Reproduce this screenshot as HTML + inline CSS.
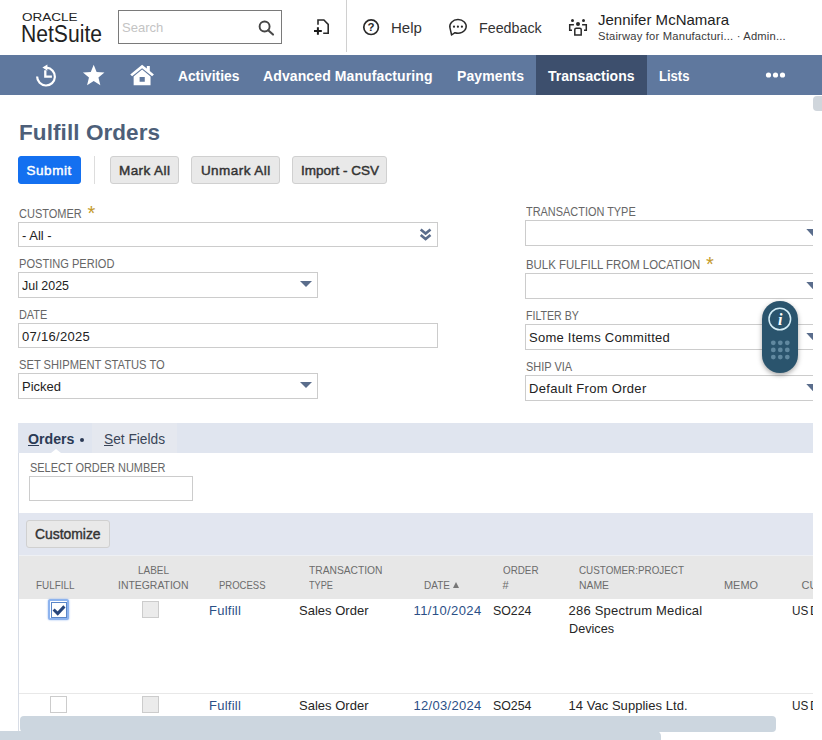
<!DOCTYPE html>
<html>
<head>
<meta charset="utf-8">
<style>
*{box-sizing:border-box;margin:0;padding:0}
html,body{width:822px;height:740px;overflow:hidden;background:#fff}
body{font-family:"Liberation Sans",sans-serif;color:#262626;position:relative}
.abs{position:absolute}
.t{position:absolute;white-space:nowrap;line-height:1;transform-origin:0 50%}
#hdr{position:absolute;left:0;top:0;width:822px;height:55px;background:#fff}
#nav{position:absolute;left:0;top:55px;width:822px;height:40px;background:#5f789e}
#nav .t{color:#fff;font-weight:bold;font-size:14px;top:14px}
#act{position:absolute;left:536px;top:0;width:111px;height:40px;background:#3d4f6d}
.lbl{font-size:12px;color:#666}
.inp{position:absolute;background:#fff;border:1px solid #ccc;height:25px}
.sel{height:26px}
.v{font-size:13px;color:#222}
.btn{position:absolute;height:28px;border:1px solid #d0d0d0;background:#e9e9e9;border-radius:3px}
.bt{font-size:13.5px;color:#333;top:163.5px;-webkit-text-stroke:0.45px #333}
.th{font-size:11px;color:#6c6c6c}
.td{font-size:13px;color:#262626}
.lnk{color:#2b4f86}
.tri{position:absolute;width:0;height:0;border-left:6px solid transparent;border-right:6px solid transparent;border-top:6.5px solid #5a6d8c}
</style>
</head>
<body>
<div id="hdr">
  <div class="t" style="transform:scaleX(1.2874);left:22px;top:11.5px;font-size:10.5px;color:#222">ORACLE</div>
  <div class="t" style="transform:scaleX(0.9182);left:21px;top:22.6px;font-size:23px;color:#222">NetSuite</div>
  <div class="abs" style="left:118px;top:10px;width:164px;height:34px;border:1px solid #7a7a7a;background:#fff"></div>
  <div class="t" style="left:122px;top:21px;font-size:13px;color:#c4c4c4">Search</div>
  <svg class="abs" style="left:0;top:0" width="822" height="55" viewBox="0 0 822 55">
    <!-- search -->
    <circle cx="264.6" cy="26.5" r="5" fill="none" stroke="#444" stroke-width="1.9"/><path d="M268.2 30.2 L273 34.6" stroke="#4a4a4a" stroke-width="2.1" stroke-linecap="round"/>
    <!-- new doc -->
    <path d="M318 24.8 V20 H323.9 L328.2 24.4 V33.3 H323.2" fill="none" stroke="#2a2a2a" stroke-width="1.6"/><path d="M314 31 H321.8 M317.9 27.2 V34.8" stroke="#1a1a1a" stroke-width="2"/>
    <!-- help -->
    <circle cx="371.1" cy="27.2" r="7.3" fill="none" stroke="#2a2a2a" stroke-width="1.7"/>
    <text x="371" y="31.2" font-size="11.5" font-weight="bold" text-anchor="middle" fill="#2a2a2a" font-family="Liberation Sans">?</text>
    <!-- feedback -->
    <path d="M454.93 32.70 A8.2 6.8 0 1 0 449.98 27.81 L451.6 35 Z" fill="none" stroke="#2a2a2a" stroke-width="1.5" stroke-linejoin="round"/>
    <circle cx="454" cy="26.7" r="1.1" fill="#2a2a2a"/><circle cx="457.9" cy="26.7" r="1.1" fill="#2a2a2a"/><circle cx="461.9" cy="26.7" r="1.1" fill="#2a2a2a"/>
    <!-- roles -->
    <circle cx="572.5" cy="20.5" r="1.5" fill="#2a2a2a"/><circle cx="583.5" cy="20.5" r="1.5" fill="#2a2a2a"/><circle cx="578" cy="23.9" r="2" fill="#2a2a2a"/>
    <path d="M574.8 35.1 V29.6 Q574.8 28.2 576.2 28.2 H579.8 Q581.2 28.2 581.2 29.6 V35.1 Z" fill="none" stroke="#2a2a2a" stroke-width="1.5"/>
    <path d="M573.9 24.8 H569.7 V30.2 H572" fill="none" stroke="#2a2a2a" stroke-width="1.5"/>
    <path d="M582.1 24.8 H586.3 V30.2 H584" fill="none" stroke="#2a2a2a" stroke-width="1.5"/>
  </svg>
  <div class="abs" style="left:346px;top:0;width:1px;height:52px;background:#d0d0d0"></div>
  <div class="t" style="left:391px;top:20px;font-size:15px;color:#333">Help</div>
  <div class="t" style="transform:scaleX(0.9518);left:478.5px;top:20px;font-size:15px;color:#333">Feedback</div>
  <div class="t" style="letter-spacing:0.01px;left:598px;top:12px;font-size:15px;color:#222">Jennifer McNamara</div>
  <div class="t" style="letter-spacing:0.20px;left:598px;top:31.3px;font-size:11.2px;color:#3a3a3a">Stairway for Manufacturi... &#183; Admin...</div>
</div>
<div id="nav">
  <div id="act"></div>
  <svg class="abs" style="left:0;top:0" width="822" height="40" viewBox="0 0 822 40">
    <!-- recent -->
    <path d="M46.6 12.7 A8.9 8.9 0 1 1 37.1 21.6" fill="none" stroke="#fff" stroke-width="2.2"/>
    <path d="M42.4 12.6 L47.4 9.5 V15.7 Z" fill="#fff"/>
    <path d="M45.3 15.3 V21.7 H51.9" fill="none" stroke="#fff" stroke-width="2.3"/>
    <!-- star -->
    <path d="M93.70 9.70 L96.62 16.98 L104.45 17.51 L98.43 22.54 L100.34 30.14 L93.70 25.97 L87.06 30.14 L88.97 22.54 L82.95 17.51 L90.78 16.98 Z" fill="#fff"/>
    <!-- home -->
    <g transform="translate(128.7,7.9) scale(1.03,0.953)"><path d="M13 2 L1.5 12.2 L3.3 14 L13 5.6 L22.7 14 L24.5 12.2 L20.5 8.6 V3.2 H17.6 V6 Z" fill="#fff"/><path d="M4.8 14.2 L13 7 L21.2 14.2 V23.5 H4.8 Z M10.6 14.8 V19.8 H15.6 V14.8 Z" fill="#fff" fill-rule="evenodd"/></g>
    <circle cx="768.5" cy="20" r="2.6" fill="#fff"/><circle cx="775.5" cy="20" r="2.6" fill="#fff"/><circle cx="782.5" cy="20" r="2.6" fill="#fff"/>
  </svg>
  <div class="t" style="transform:scaleX(0.9847);left:178px">Activities</div>
  <div class="t" style="letter-spacing:0.11px;left:263px">Advanced Manufacturing</div>
  <div class="t" style="letter-spacing:0.11px;left:457px">Payments</div>
  <div class="t" style="letter-spacing:0.01px;left:548px">Transactions</div>
  <div class="t" style="transform:scaleX(0.9331);left:659px">Lists</div>
</div>

<div class="abs" style="left:813px;top:96px;width:12px;height:15px;border-radius:4px;background:#d0d6dc"></div>

<div class="t" style="letter-spacing:0.08px;left:19px;top:122.3px;font-size:22.5px;font-weight:bold;color:#4d5f79">Fulfill Orders</div>

<div class="btn" style="left:18px;top:156px;width:63px;background:#1470f0;border-color:#1470f0"></div>
<div class="t bt" style="letter-spacing:0.54px;left:26.5px;color:#fff;-webkit-text-stroke:0.45px #fff">Submit</div>
<div class="abs" style="left:93.5px;top:156px;width:1px;height:28px;background:#ddd"></div>
<div class="btn" style="left:110px;top:156px;width:69px"></div>
<div class="t bt" style="letter-spacing:0.42px;left:119px">Mark All</div>
<div class="btn" style="left:191px;top:156px;width:89px"></div>
<div class="t bt" style="letter-spacing:0.45px;left:200.9px">Unmark All</div>
<div class="btn" style="left:292px;top:156px;width:95px"></div>
<div class="t bt" style="transform:scaleX(0.9998);left:300.5px">Import - CSV</div>

<!-- left column -->
<div class="t lbl" style="transform:scaleX(0.9174);left:18.5px;top:208px">CUSTOMER</div>
<div class="t" style="left:87.5px;top:203px;font-size:20px;color:#c49a2b">*</div>
<div class="inp" style="left:18px;top:222px;width:420px"></div>
<div class="t v" style="left:22px;top:229px">- All -</div>
<svg class="abs" style="left:418px;top:227px" width="15" height="15" viewBox="0 0 15 15"><path d="M2.7 2.4 L7.6 6.5 L12.5 2.4 M2.7 7.9 L7.6 12 L12.5 7.9" fill="none" stroke="#5a6d8c" stroke-width="2.6"/></svg>

<div class="t lbl" style="transform:scaleX(0.9230);left:18.5px;top:258px">POSTING PERIOD</div>
<div class="inp sel" style="left:18px;top:272px;width:300px"></div>
<div class="t v" style="transform:scaleX(0.9561);left:22px;top:278.8px">Jul 2025</div>
<div class="tri" style="left:299.5px;top:281.3px"></div>

<div class="t lbl" style="transform:scaleX(0.9060);left:18.5px;top:309px">DATE</div>
<div class="inp" style="left:18px;top:323px;width:420px"></div>
<div class="t v" style="letter-spacing:0.30px;left:22px;top:330px">07/16/2025</div>

<div class="t lbl" style="transform:scaleX(0.9298);left:18.5px;top:359px">SET SHIPMENT STATUS TO</div>
<div class="inp sel" style="left:18px;top:373px;width:300px"></div>
<div class="t v" style="transform:scaleX(0.9966);left:22px;top:379.8px">Picked</div>
<div class="tri" style="left:299.5px;top:382.3px"></div>

<!-- right column -->
<div class="t lbl" style="transform:scaleX(0.9106);left:525.5px;top:206px">TRANSACTION TYPE</div>
<div class="inp sel" style="left:525px;top:220px;width:300px"></div>
<div class="t lbl" style="transform:scaleX(0.9505);left:525.5px;top:259px">BULK FULFILL FROM LOCATION</div>
<div class="t" style="left:706px;top:254px;font-size:20px;color:#c49a2b">*</div>
<div class="inp sel" style="left:525px;top:273px;width:300px"></div>
<div class="t lbl" style="transform:scaleX(0.8847);left:525.5px;top:310px">FILTER BY</div>
<div class="inp sel" style="left:525px;top:324px;width:300px"></div>
<div class="t v" style="letter-spacing:0.26px;left:529px;top:330.8px">Some Items Committed</div>
<div class="t lbl" style="transform:scaleX(0.9154);left:525.5px;top:361px">SHIP VIA</div>
<div class="inp sel" style="left:525px;top:375px;width:300px"></div>
<div class="t v" style="letter-spacing:0.31px;left:529px;top:381.8px">Default From Order</div>
<svg class="abs" style="left:806px;top:228px" width="8" height="170" viewBox="0 0 8 170"><path d="M0.3 0.9 H7 V8.2 Z M0.3 53.9 H7 V61.2 Z M0.3 104.9 H7 V112.2 Z M0.3 155.9 H7 V163.2 Z" fill="#5a6d8c"/></svg>


<!-- floating widget -->
<div class="abs" style="left:762px;top:301px;width:36px;height:72px;border-radius:18px;background:#2a546d;box-shadow:0 2px 5px rgba(0,0,0,.35)"></div>
<svg class="abs" style="left:762px;top:301px" width="36" height="72" viewBox="0 0 36 72">
<circle cx="17.8" cy="18" r="10.8" fill="none" stroke="#d4eef8" stroke-width="1.5"/>
<text x="18.3" y="23.5" font-size="16" font-style="italic" font-weight="bold" text-anchor="middle" fill="#fff" font-family="Liberation Serif">i</text>
<g fill="#6189a0"><circle cx="11.3" cy="41.8" r="2.4"/><circle cx="18.3" cy="41.8" r="2.4"/><circle cx="25.3" cy="41.8" r="2.4"/><circle cx="11.3" cy="48.9" r="2.4"/><circle cx="18.3" cy="48.9" r="2.4"/><circle cx="25.3" cy="48.9" r="2.4"/><circle cx="11.3" cy="56.1" r="2.4"/><circle cx="18.3" cy="56.1" r="2.4"/><circle cx="25.3" cy="56.1" r="2.4"/></g>
</svg>

<!-- tabs -->
<div class="abs" style="left:18px;top:423px;width:795px;height:30px;background:#e0e5ef"></div>
<div class="abs" style="left:92px;top:423px;width:85px;height:30px;background:#e5e8ef"></div>
<div class="abs" style="left:51px;top:449px;width:0;height:0;border-left:5px solid transparent;border-right:5px solid transparent;border-bottom:4px solid #fff"></div>
<div class="abs" style="left:18px;top:453px;width:1px;height:287px;background:#d8dde6"></div>
<div class="t" style="transform:scaleX(0.9777);left:28px;top:432px;font-size:14.5px;font-weight:bold;color:#2b3a55"><u>O</u>rders</div>
<div class="abs" style="left:79.5px;top:438px;width:4px;height:4px;border-radius:50%;background:#2b3a55"></div>
<div class="t" style="transform:scaleX(0.9797);left:104px;top:432px;font-size:14px;color:#3a4558"><u>S</u>et Fields</div>

<div class="t lbl" style="transform:scaleX(0.9126);left:29.5px;top:462px">SELECT ORDER NUMBER</div>
<div class="inp" style="left:29px;top:476px;width:164px"></div>

<div class="abs" style="left:19px;top:513px;width:794px;height:42px;background:#e2e6f0"></div>
<div class="btn" style="left:26px;top:520px;width:84px;height:28px"></div>
<div class="t" style="transform:scaleX(0.9918);left:35.3px;top:527px;font-size:14px;color:#333;-webkit-text-stroke:0.4px #333">Customize</div>

<!-- table header -->
<div class="abs" style="left:19px;top:555px;width:794px;height:43.5px;background:#e7e7e7;border-top:1px solid #eef0f4"></div>
<div class="t th" style="transform:scaleX(0.8996);left:35.5px;top:580px">FULFILL</div>
<div class="t th" style="transform:scaleX(0.9051);left:137.5px;top:565px">LABEL</div>
<div class="t th" style="transform:scaleX(0.9481);left:117.5px;top:580px">INTEGRATION</div>
<div class="t th" style="transform:scaleX(0.8644);left:219px;top:580px">PROCESS</div>
<div class="t th" style="transform:scaleX(0.9322);left:309px;top:565px">TRANSACTION</div>
<div class="t th" style="transform:scaleX(0.8352);left:309px;top:580px">TYPE</div>
<div class="t th" style="transform:scaleX(0.9113);left:423.5px;top:580px">DATE</div>
<div class="abs" style="left:452.5px;top:582px;width:0;height:0;border-left:3.5px solid transparent;border-right:3.5px solid transparent;border-bottom:6px solid #777"></div>
<div class="t th" style="transform:scaleX(0.8934);left:502.5px;top:565px">ORDER</div>
<div class="t th" style="left:502.5px;top:580px">#</div>
<div class="t th" style="transform:scaleX(0.8964);left:578.5px;top:565px">CUSTOMER:PROJECT</div>
<div class="t th" style="transform:scaleX(0.9440);left:578.5px;top:580px">NAME</div>
<div class="t th" style="transform:scaleX(0.9932);left:723.5px;top:580px">MEMO</div>
<div class="t th" style="left:801.5px;top:580px">CUSTOMER</div>

<!-- row 1 -->
<div class="abs" style="left:48px;top:599px;width:21px;height:21px;border:2px solid #8db3ee;border-radius:2.5px;background:#fff;box-shadow:0 0 2px #8db3ee"></div>
<div class="abs" style="left:50.5px;top:601.5px;width:16px;height:16px;border:1px solid #5b86c8;background:#fff"></div>
<svg class="abs" style="left:50px;top:601px" width="17" height="17" viewBox="0 0 17 17"><path d="M3.6 8.5 L7.7 12.5 L14.4 5.4" fill="none" stroke="#27457b" stroke-width="3"/></svg>
<div class="abs" style="left:142px;top:601px;width:17px;height:17px;border:1px solid #ccc;background:#ebebeb"></div>
<div class="t td lnk" style="letter-spacing:0.24px;left:209px;top:603.8px">Fulfill</div>
<div class="t td" style="letter-spacing:0.01px;left:299px;top:603.8px">Sales Order</div>
<div class="t td lnk" style="letter-spacing:0.39px;left:413.5px;top:603.8px">11/10/2024</div>
<div class="t td" style="transform:scaleX(0.9510);left:492.5px;top:603.8px">SO224</div>
<div class="t td" style="letter-spacing:0.23px;left:568.5px;top:603.8px">286 Spectrum Medical</div>
<div class="t td" style="transform:scaleX(0.9730);left:568.5px;top:621.8px">Devices</div>
<div class="t td" style="transform:scaleX(0.9024);left:791.5px;top:603.8px">US</div><div class="t td" style="left:810px;top:603.8px">Dollar</div>

<div class="abs" style="left:19px;top:693px;width:794px;height:1px;background:#e8e8e8"></div>
<!-- row 2 -->
<div class="abs" style="left:50px;top:696px;width:17px;height:17px;border:1px solid #ccc;background:#fff"></div>
<div class="abs" style="left:142px;top:696px;width:17px;height:17px;border:1px solid #ccc;background:#ebebeb"></div>
<div class="t td lnk" style="letter-spacing:0.24px;left:209px;top:698.8px">Fulfill</div>
<div class="t td" style="letter-spacing:0.01px;left:299px;top:698.8px">Sales Order</div>
<div class="t td lnk" style="letter-spacing:0.29px;left:413.5px;top:698.8px">12/03/2024</div>
<div class="t td" style="transform:scaleX(0.9510);left:492.5px;top:698.8px">SO254</div>
<div class="t td" style="letter-spacing:0.04px;left:568.5px;top:698.8px">14 Vac Supplies Ltd.</div>
<div class="t td" style="transform:scaleX(0.9024);left:791.5px;top:698.8px">US</div><div class="t td" style="left:810px;top:698.8px">Dollar</div>

<div class="abs" style="left:813px;top:112px;width:9px;height:628px;background:#fff"></div>
<!-- scrollbars -->
<div class="abs" style="left:20px;top:715.7px;width:756px;height:16px;border-radius:4px;background:#ccd6df"></div>
<div class="abs" style="left:-6px;top:731px;width:667px;height:15px;border-radius:5px;background:#ccd6df"></div>
</body>
</html>
